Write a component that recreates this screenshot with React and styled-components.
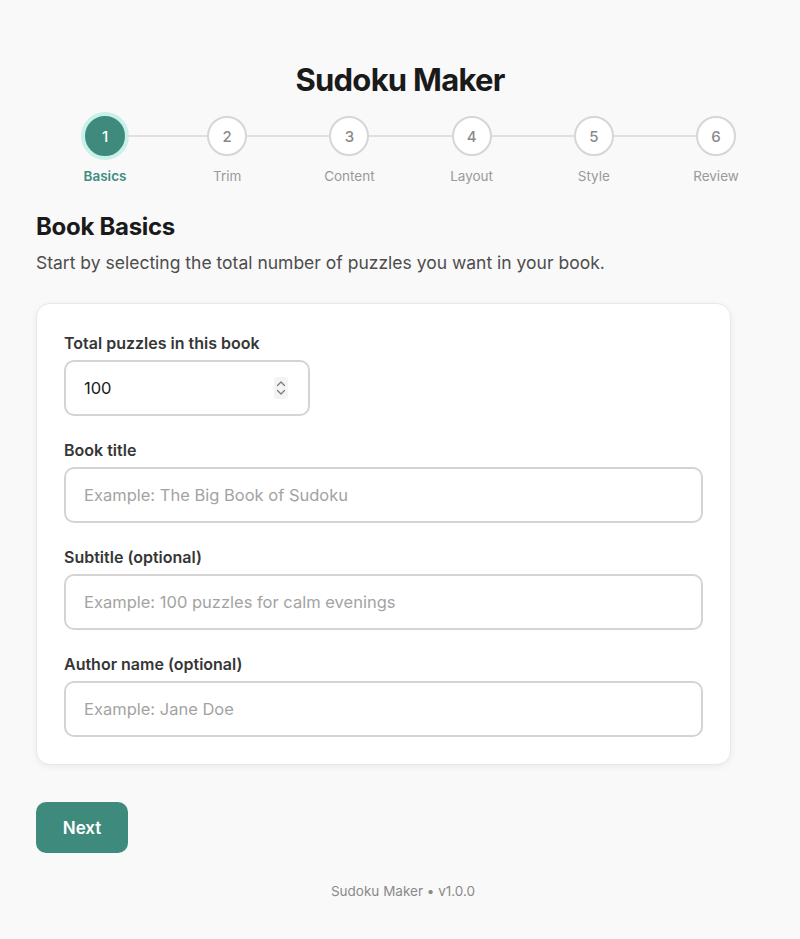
import React from "react";
import styled, { createGlobalStyle } from "styled-components";

const Global = createGlobalStyle`
  html, body { margin: 0; padding: 0; background: #f9f9f9; }
  body { font-family: Inter, "Noto Sans", "Liberation Sans", sans-serif; color: #1a1a1a; }
  * { box-sizing: border-box; }
`;

const Page = styled.div`
  width: 800px;
  min-height: 939px;
  padding: 60px 36px 0 36px;
  display: flex;
  flex-direction: column;
`;

const Title = styled.h1`
  margin: 0;
  text-align: center;
  font-size: 31px;
  font-weight: 700;
  letter-spacing: -0.75px;
  line-height: 40px;
  color: #1a1a1a;
`;

const Stepper = styled.div`
  display: flex;
  align-items: flex-start;
  margin: 16px 18px 0 39px;
`;

const Step = styled.div`
  width: 60px;
  display: flex;
  flex-direction: column;
  align-items: center;
  flex-shrink: 0;
`;

const Circle = styled.div`
  width: 40px;
  height: 40px;
  border-radius: 50%;
  display: flex;
  align-items: center;
  justify-content: center;
  font-size: 15px;
  font-weight: 500;
  background: ${p => (p.$active ? "#3e8b7e" : "#ffffff")};
  color: ${p => (p.$active ? "#ffffff" : "#8a8a8a")};
  border: 2px solid ${p => (p.$active ? "#3e8b7e" : "#d6d6d6")};
  box-shadow: ${p => (p.$active ? "0 0 0 4px #c9f1ea" : "none")};
`;

const StepLabel = styled.div`
  margin-top: 12px;
  font-size: 13.5px;
  line-height: 16px;
  white-space: nowrap;
  font-weight: ${p => (p.$active ? 600 : 400)};
  color: ${p => (p.$active ? "#3e8b7e" : "#9a9a9a")};
`;

const Connector = styled.div`
  flex: 1;
  height: 2px;
  background: #e0e0e0;
  margin-top: 19px;
  margin-left: -10px;
  margin-right: -10px;
`;

const Heading = styled.h2`
  margin: 28px 0 0 0;
  font-size: 24px;
  font-weight: 700;
  letter-spacing: -0.3px;
  line-height: 30px;
  color: #1a1a1a;
`;

const Lead = styled.p`
  margin: 9px 0 0 0;
  font-size: 17.5px;
  line-height: 24px;
  color: #4d4d4d;
`;

const Card = styled.div`
  margin-top: 28px;
  width: 695px;
  background: #ffffff;
  border: 1px solid #e8e8e8;
  border-radius: 14px;
  box-shadow: 0 2px 6px rgba(0, 0, 0, 0.06);
  padding: 29px 27px 27px 27px;
  display: flex;
  flex-direction: column;
  gap: 24px;
`;

const Field = styled.div`
  display: flex;
  flex-direction: column;
  gap: 6px;
`;

const Label = styled.label`
  font-size: 16px;
  font-weight: 600;
  line-height: 21px;
  color: #363636;
`;

const InputBox = styled.div`
  height: 56px;
  width: ${p => p.$w || "100%"};
  border: 2px solid #d4d4d4;
  border-radius: 10px;
  background: #fff;
  display: flex;
  align-items: center;
  padding: 0 18px;
`;

const Input = styled.input`
  flex: 1;
  min-width: 0;
  border: none;
  outline: none;
  background: transparent;
  font-family: inherit;
  font-size: 16.5px;
  color: #1a1a1a;
  padding: 0;
  &::placeholder { color: #a3a3a3; }
  &::-webkit-inner-spin-button, &::-webkit-outer-spin-button { -webkit-appearance: none; margin: 0; }
`;

const Spinner = styled.svg`
  flex-shrink: 0;
  margin-right: 2px;
`;

const NextButton = styled.button`
  align-self: flex-start;
  margin-top: 37px;
  width: 92px;
  height: 51px;
  border: none;
  border-radius: 10px;
  background: #3e8b7e;
  color: #fff;
  font-family: inherit;
  font-size: 17px;
  font-weight: 600;
  cursor: pointer;
`;

const Footer = styled.div`
  margin-top: 30px;
  padding-left: 6px;
  text-align: center;
  font-size: 13.5px;
  color: #8a8a8a;
`;

const steps = ["Basics", "Trim", "Content", "Layout", "Style", "Review"];

export default function App() {
  return (
    <>
      <Global />
      <Page>
        <Title>Sudoku Maker</Title>
        <Stepper>
          {steps.map((s, i) => (
            <React.Fragment key={s}>
              {i > 0 && <Connector />}
              <Step>
                <Circle $active={i === 0}>{i + 1}</Circle>
                <StepLabel $active={i === 0}>{s}</StepLabel>
              </Step>
            </React.Fragment>
          ))}
        </Stepper>
        <Heading>Book Basics</Heading>
        <Lead>Start by selecting the total number of puzzles you want in your book.</Lead>
        <Card>
          <Field>
            <Label>Total puzzles in this book</Label>
            <InputBox $w="246px">
              <Input type="number" defaultValue="100" />
              <Spinner width="14" height="22" viewBox="0 0 14 22">
                <rect x="0" y="0" width="14" height="22" rx="3" fill="#f4f4f4" />
                <path d="M3.5 8.5 L7 5 L10.5 8.5" fill="none" stroke="#7a7a7a" strokeWidth="1.3" strokeLinecap="round" strokeLinejoin="round" />
                <path d="M3.5 13.5 L7 17 L10.5 13.5" fill="none" stroke="#7a7a7a" strokeWidth="1.3" strokeLinecap="round" strokeLinejoin="round" />
              </Spinner>
            </InputBox>
          </Field>
          <Field>
            <Label>Book title</Label>
            <InputBox>
              <Input placeholder="Example: The Big Book of Sudoku" />
            </InputBox>
          </Field>
          <Field>
            <Label>Subtitle (optional)</Label>
            <InputBox>
              <Input placeholder="Example: 100 puzzles for calm evenings" />
            </InputBox>
          </Field>
          <Field>
            <Label>Author name (optional)</Label>
            <InputBox>
              <Input placeholder="Example: Jane Doe" />
            </InputBox>
          </Field>
        </Card>
        <NextButton>Next</NextButton>
        <Footer>Sudoku Maker • v1.0.0</Footer>
      </Page>
    </>
  );
}
